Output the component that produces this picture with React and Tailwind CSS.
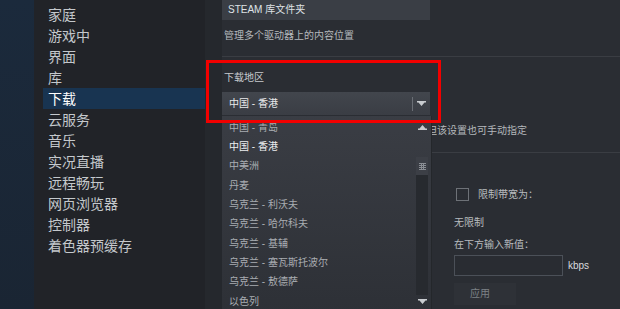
import React from 'react';

const navItems = ['家庭', '游戏中', '界面', '库', '下载', '云服务', '音乐', '实况直播', '远程畅玩', '网页浏览器', '控制器', '着色器预缓存'];

const regions = [
  { name: '中国 - 青岛' },
  { name: '中国 - 香港', selected: true },
  { name: '中美洲' },
  { name: '丹麦' },
  { name: '乌克兰 - 利沃夫' },
  { name: '乌克兰 - 哈尔科夫' },
  { name: '乌克兰 - 基辅' },
  { name: '乌克兰 - 塞瓦斯托波尔' },
  { name: '乌克兰 - 敖德萨' },
  { name: '以色列' },
];

function Caret({ up = false }) {
  return (
    <svg width="9" height="6" viewBox="0 0 9 6" className={up ? 'rotate-180' : ''}>
      <path d="M0 0h9v1.5H0z M1.5 1.5h6L4.5 5z" fill="#c9ccd0" />
    </svg>
  );
}

export default function App() {
  return (
    <div className="relative flex w-[620px] h-[309px] overflow-hidden font-['Liberation_Sans','Noto_Sans_CJK_SC',sans-serif] bg-[#2a2d33]">
      {/* far-left backdrop */}
      <div className="w-[34px] shrink-0 bg-gradient-to-b from-[#1b2a3c] to-[#1a2533]" />

      {/* settings nav */}
      <div className="w-[171px] shrink-0 bg-[#212328] pl-[9px] pt-[4px]">
        {navItems.map((item) => (
          <div
            key={item}
            className={`h-[21px] flex items-center pl-[5px] text-[14px] leading-none ${
              item === '下载' ? 'bg-[#183451] text-white' : 'text-[#c4c8cc]'
            }`}
          >
            {item}
          </div>
        ))}
      </div>

      {/* gutter */}
      <div className="w-[17px] shrink-0 bg-[#25282d]" />

      {/* content */}
      <div className="relative flex-1 bg-[#2a2d33] text-[10px] leading-[12px]">
        <div className="w-[208px] h-[20px] bg-[#3a3e45] flex items-center pl-[6px] text-[#dfe2e5]">
          STEAM 库文件夹
        </div>
        <p className="mt-[10px] pl-[2px] text-[#b4b8bc]">管理多个驱动器上的内容位置</p>

        <div className="mt-[14px] h-px bg-[#3a3d43]" />

        <p className="mt-[15px] pl-[2px] text-[#c8cbcf]">下载地区</p>
        <div className="mt-[8px] w-[208px] h-[23px] bg-gradient-to-b from-[#42464d] to-[#3a3d44] flex items-center">
          <span className="flex-1 pl-[7px] text-[#e9eaec]">中国 - 香港</span>
          <div className="w-px h-[14px] bg-[#6a6e75]" />
          <div className="w-[17px] flex justify-center">
            <Caret />
          </div>
        </div>

        <p className="mt-[10px] pl-[205px] text-[#b4b8bc] whitespace-nowrap">但该设置也可手动指定</p>
        <div className="mt-[15px] ml-[208px] h-px bg-[#3a3d43]" />

        {/* bandwidth */}
        <div className="ml-[232px]">
          <div className="mt-[35px] flex items-center">
            <div className="ml-[2px] w-[13px] h-[13px] border border-[#6d7177] bg-[#2a2d33]" />
            <span className="ml-[9px] text-[#b8bbbf]">限制带宽为：</span>
          </div>
          <p className="mt-[16px] text-[#b8bbbf]">无限制</p>
          <p className="mt-[10px] text-[#b8bbbf]">在下方输入新值：</p>
          <div className="mt-[4px] flex items-center">
            <div className="w-[109px] h-[21px] border border-[#4b5058] bg-[#292c32]" />
            <span className="ml-[5px] text-[#d8dbde]">kbps</span>
          </div>
          <div className="mt-[7px] w-[62px] h-[22px] bg-[#2e3137] flex items-center pl-[16px] text-[#7d8186]">
            应用
          </div>
        </div>

        {/* open dropdown list */}
        <div className="absolute left-0 top-[116px] w-[210px] h-[200px] bg-gradient-to-b from-[#3a3d44] to-[#2d3036] border-r border-[#24272b] flex">
          <div className="flex-1 pt-[2px]">
            {regions.map((r) => (
              <div
                key={r.name}
                className={`h-[19.33px] flex items-center pl-[7px] whitespace-nowrap ${
                  r.selected ? 'text-[#eceef0]' : 'text-[#a9adb2]'
                }`}
              >
                {r.name}
              </div>
            ))}
          </div>
          {/* scrollbar */}
          <div className="w-[12px] mr-[3px] flex flex-col items-center">
            <div className="h-[21px] flex items-center justify-center">
              <Caret up />
            </div>
            <div className="mt-[20px] h-[18px] w-full bg-[#3c3f46] flex items-center justify-center">
              <svg width="7" height="7" viewBox="0 0 7 7">
                <path d="M0 0h7v1H0zM0 2h7v1H0zM0 4h7v1H0zM0 6h7v1H0z" fill="#8a8e94" />
                <path d="M2 0h1v7H2zM4 0h1v7H4z" fill="#8a8e94" />
              </svg>
            </div>
            <div className="h-[120px] w-full bg-[#272a2f]" />
            <div className="h-[14px] flex items-center justify-center">
              <Caret />
            </div>
          </div>
        </div>
      </div>

      {/* annotation box */}
      <div className="absolute left-[206px] top-[60px] w-[235px] h-[63px] border-[3px] border-[#f20000]" />
    </div>
  );
}
